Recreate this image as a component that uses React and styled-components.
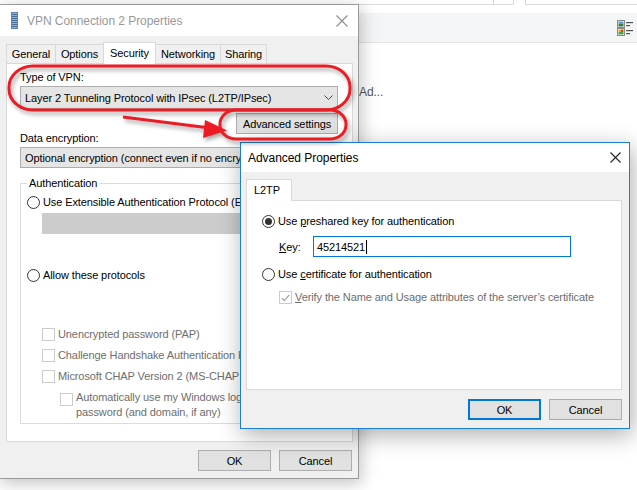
import React from 'react';
import styled, { createGlobalStyle } from 'styled-components';

const GlobalStyle = createGlobalStyle`
  html, body { margin: 0; padding: 0; background: #fff; }
  body {
    font-family: "Liberation Sans", Arial, sans-serif;
    font-size: 11px;
    letter-spacing: -0.1px;
    color: #000;
  }
  #root { width: 637px; height: 490px; }
`;

const Desktop = styled.div`
  position: relative;
  width: 637px;
  height: 490px;
  overflow: hidden;
  background: #fff;
`;

/* ---------- background (settings) window ---------- */
const BackWindow = styled.div`
  position: absolute;
  inset: 0;
  display: flex;
  flex-direction: column;
`;

const TopStrip = styled.div`
  display: flex;
  height: 5px;
`;

const StripCell = styled.div`
  box-sizing: border-box;
  width: ${p => p.$w}px;
  flex: ${p => (p.$grow ? '1' : 'none')};
  border-bottom: ${p => (p.$gap ? 'none' : '1px solid #dadada')};
  border-right: ${p => (p.$sep ? '1px solid #dadada' : 'none')};
`;

const ToolBand = styled.div`
  margin-top: 8px;
  height: 30px;
  box-sizing: border-box;
  background: #f4f5f6;
  border-bottom: 1px solid #e4e4e4;
  display: flex;
  align-items: center;
  justify-content: flex-end;
  padding-right: 4px;
`;

const BackContent = styled.div`
  padding: 42px 0 0 359px;
  color: #555;
  font-size: 12px;
`;

/* ---------- windows ---------- */
const Window = styled.div`
  position: absolute;
  left: ${p => p.$left}px;
  top: ${p => p.$top}px;
  width: ${p => p.$w}px;
  height: ${p => p.$h}px;
  box-sizing: border-box;
  border: 1px solid ${p => (p.$active ? '#1a7fd4' : '#9a9a9a')};
  background: #f0f0f0;
  display: flex;
  flex-direction: column;
  box-shadow: ${p => (p.$active ? '2px 6px 22px rgba(0,0,0,0.32)' : '2px 4px 16px rgba(0,0,0,0.25)')};
`;

const TitleBar = styled.div`
  height: ${p => p.$h}px;
  flex: none;
  background: #fff;
  display: flex;
  align-items: center;
  padding-left: ${p => p.$pl}px;
  gap: 9px;
`;

const TitleText = styled.span`
  font-size: 12px;
  letter-spacing: -0.05px;
  color: ${p => (p.$active ? '#000' : '#999')};
  flex: 1;
`;

const CloseBtn = styled.div`
  width: ${p => p.$w}px;
  height: 100%;
  display: flex;
  align-items: center;
  justify-content: center;
`;

const WinBody = styled.div`
  flex: 1;
  display: flex;
  flex-direction: column;
  padding: ${p => p.$pad};
`;

const TabRow = styled.div`
  display: flex;
  align-items: flex-end;
  height: 22px;
  margin-bottom: -1px;
  position: relative;
  z-index: 1;
`;

const Tab = styled.div`
  box-sizing: border-box;
  width: ${p => p.$w}px;
  height: ${p => (p.$active ? 22 : 20)}px;
  margin-left: ${p => (p.$first ? 0 : -1)}px;
  border: 1px solid #d9d9d9;
  border-bottom: ${p => (p.$active ? 'none' : '1px solid #d9d9d9')};
  background: ${p => (p.$active ? '#fff' : '#f0f0f0')};
  display: flex;
  align-items: center;
  justify-content: ${p => (p.$left ? 'flex-start' : 'center')};
  padding-left: ${p => (p.$left ? 7 : 0)}px;
  padding-bottom: ${p => (p.$active ? 1 : 0)}px;
  position: relative;
  z-index: ${p => (p.$active ? 2 : 1)};
`;

const Panel = styled.div`
  box-sizing: border-box;
  height: ${p => p.$h}px;
  flex: none;
  background: #fff;
  border: 1px solid #d9d9d9;
  display: flex;
  flex-direction: column;
  padding: ${p => p.$pad};
`;

const Label = styled.div`
  line-height: 15px;
  height: 15px;
  margin-top: ${p => p.$mt || 0}px;
  white-space: nowrap;
`;

const Select = styled.div`
  box-sizing: border-box;
  height: ${p => p.$h}px;
  margin-top: ${p => p.$mt || 0}px;
  border: 1px solid #adadad;
  background: #e5e5e5;
  display: flex;
  align-items: center;
  padding: 0 4px 0 4px;
  white-space: nowrap;
  overflow: hidden;
`;

const SelectText = styled.span`
  flex: 1;
`;

const ButtonRow = styled.div`
  display: flex;
  justify-content: flex-end;
  gap: 8px;
  margin-top: ${p => p.$mt || 0}px;
  padding-right: ${p => p.$pr || 0}px;
`;

const Button = styled.div`
  box-sizing: border-box;
  width: ${p => p.$w}px;
  height: 21px;
  background: #e1e1e1;
  border: ${p => (p.$default ? '2px solid #0078d7' : '1px solid #adadad')};
  display: flex;
  align-items: center;
  justify-content: center;
  white-space: nowrap;
`;

const Group = styled.fieldset`
  margin: ${p => p.$mt}px 0 0 0;
  min-width: 0;
  border: 1px solid #dcdcdc;
  padding: 0 0 3px 6px;
  display: flex;
  flex-direction: column;
`;

const Legend = styled.legend`
  padding: 0 2px;
  line-height: 15px;
`;

const OptionRow = styled.div`
  display: flex;
  align-items: ${p => (p.$top ? 'flex-start' : 'center')};
  gap: 3px;
  min-height: 15px;
  line-height: 15px;
  margin-top: ${p => p.$mt || 0}px;
  margin-left: ${p => p.$ml || 0}px;
  color: ${p => (p.$disabled ? '#6d6d6d' : '#000')};
  white-space: nowrap;
`;

const Radio = styled.span`
  box-sizing: border-box;
  width: 13px;
  height: 13px;
  flex: none;
  border-radius: 50%;
  border: 1px solid #333;
  background: #fff;
  display: flex;
  align-items: center;
  justify-content: center;
  &::after {
    content: '';
    width: 7px;
    height: 7px;
    border-radius: 50%;
    background: #333;
    display: ${p => (p.$checked ? 'block' : 'none')};
  }
`;

const Check = styled.span`
  box-sizing: border-box;
  width: 13px;
  height: 13px;
  flex: none;
  margin-top: ${p => p.$mt || 0}px;
  border: 1px solid #cccccc;
  background: #fff;
  display: flex;
  align-items: center;
  justify-content: center;
`;

const DisabledBox = styled.div`
  width: 290px;
  height: 21px;
  margin: 3px 0 0 15px;
  background: #cccccc;
`;

const KeyRow = styled.div`
  display: flex;
  align-items: center;
  margin: 7px 0 0 17px;
`;

const KeyLabel = styled.span`
  width: 34px;
`;

const TextInput = styled.div`
  box-sizing: border-box;
  width: 258px;
  height: 21px;
  border: 1px solid #0078d7;
  background: #fff;
  display: flex;
  align-items: center;
  padding-left: 3px;
`;

const Caret = styled.span`
  width: 1px;
  height: 14px;
  background: #000;
  margin-left: 1px;
`;

const Overlay = styled.svg`
  position: absolute;
  left: 0;
  top: 0;
  pointer-events: none;
  overflow: visible;
  filter: drop-shadow(2px 3px 2px rgba(0, 0, 0, 0.35));
`;

/* ---------- icons ---------- */
const VpnIcon = () => (
  <svg width="7" height="17" viewBox="0 0 7 17">
    <rect x="0" y="0" width="7" height="17" fill="#5e83b0" />
    <rect x="1" y="1" width="5" height="15" fill="#8fb0d6" />
    {[2, 4, 6, 8, 10, 12, 14].map(y => (
      <rect key={y} x="1" y={y} width="5" height="1" fill="#4a6f9c" />
    ))}
  </svg>
);

const XIcon = ({ color, size }) => (
  <svg width={size} height={size} viewBox={`0 0 ${size} ${size}`}>
    <path d={`M0.5 0.5 L${size - 0.5} ${size - 0.5} M${size - 0.5} 0.5 L0.5 ${size - 0.5}`} stroke={color} strokeWidth="1.1" fill="none" />
  </svg>
);

const Chevron = () => (
  <svg width="9" height="5" viewBox="0 0 9 5" style={{ marginRight: 0 }}>
    <path d="M0.5 0.5 L4.5 4.5 L8.5 0.5" stroke="#444" strokeWidth="1" fill="none" />
  </svg>
);

const CheckMark = () => (
  <svg width="9" height="8" viewBox="0 0 9 8">
    <path d="M0.8 4.2 L3.3 6.6 L8.2 0.9" stroke="#a8a8a8" strokeWidth="1.4" fill="none" />
  </svg>
);

const ViewIcon = () => (
  <svg width="16" height="16" viewBox="0 0 16 16">
    <rect x="0.5" y="0.5" width="7" height="7" fill="#fff" stroke="#8a8a8a" />
    <rect x="1.5" y="1.5" width="5" height="2" fill="#5aa0d8" />
    <rect x="1.5" y="3.5" width="5" height="3" fill="#3d7a3d" />
    <rect x="0.5" y="8.5" width="7" height="7" fill="#fff" stroke="#8a8a8a" />
    <rect x="1.5" y="9.5" width="2.5" height="2.5" fill="#e8b020" />
    <rect x="4" y="9.5" width="2.5" height="2.5" fill="#d84030" />
    <rect x="1.5" y="12" width="5" height="2.5" fill="#50a050" />
    <rect x="9" y="2" width="7" height="1.2" fill="#555" />
    <rect x="9" y="5" width="4" height="1.2" fill="#555" />
    <rect x="9" y="10" width="7" height="1.2" fill="#555" />
    <rect x="9" y="13" width="4" height="1.2" fill="#555" />
  </svg>
);

export default function App() {
  return (
    <Desktop>
      <GlobalStyle />

      <BackWindow>
        <TopStrip>
          <StripCell $w={494} $sep />
          <StripCell $w={20} $sep />
          <StripCell $w={12} $gap $sep />
          <StripCell $grow />
        </TopStrip>
        <ToolBand>
          <ViewIcon />
        </ToolBand>
        <BackContent>Ad...</BackContent>
      </BackWindow>

      {/* VPN Connection 2 Properties */}
      <Window $left={-1} $top={4} $w={360} $h={475}>
        <TitleBar $h={31} $pl={11}>
          <VpnIcon />
          <TitleText>VPN Connection 2 Properties</TitleText>
          <CloseBtn $w={32}>
            <XIcon color="#8c8c8c" size={12} />
          </CloseBtn>
        </TitleBar>
        <WinBody $pad="6px 5px 0 6px">
          <TabRow>
            <Tab $w={50} $first>General</Tab>
            <Tab $w={49}>Options</Tab>
            <Tab $w={53} $active>Security</Tab>
            <Tab $w={66}>Networking</Tab>
            <Tab $w={47}>Sharing</Tab>
          </TabRow>
          <Panel $h={379} $pad="6px 14px 0 13px">
            <Label>Type of VPN:</Label>
            <Select $h={23} $mt={1}>
              <SelectText>Layer 2 Tunneling Protocol with IPsec (L2TP/IPsec)</SelectText>
              <Chevron />
            </Select>
            <ButtonRow $mt={4}>
              <Button $w={102}>Advanced settings</Button>
            </ButtonRow>
            <Label $mt={-3}>Data encryption:</Label>
            <Select $h={21} $mt={1}>
              <SelectText>Optional encryption (connect even if no encryption)</SelectText>
              <Chevron />
            </Select>
            <Group $mt={8}>
              <Legend>Authentication</Legend>
              <OptionRow $mt={4}>
                <Radio />
                <span>Use Extensible Authentication Protocol (EAP)</span>
              </OptionRow>
              <DisabledBox />
              <OptionRow $mt={34}>
                <Radio />
                <span>Allow these protocols</span>
              </OptionRow>
              <OptionRow $mt={44} $ml={15} $disabled>
                <Check />
                <span>Unencrypted password (PAP)</span>
              </OptionRow>
              <OptionRow $mt={6} $ml={15} $disabled>
                <Check />
                <span>Challenge Handshake Authentication Protocol (CHAP)</span>
              </OptionRow>
              <OptionRow $mt={6} $ml={15} $disabled>
                <Check />
                <span>Microsoft CHAP Version 2 (MS-CHAP v2)</span>
              </OptionRow>
              <OptionRow $mt={6} $ml={33} $disabled $top>
                <Check $mt={3} />
                <span>
                  Automatically use my Windows logon name and
                  <br />
                  password (and domain, if any)
                </span>
              </OptionRow>
            </Group>
          </Panel>
          <ButtonRow $mt={8} $pr={1}>
            <Button $w={73}>OK</Button>
            <Button $w={73}>Cancel</Button>
          </ButtonRow>
        </WinBody>
      </Window>

      {/* Advanced Properties */}
      <Window $left={240} $top={142} $w={390} $h={287} $active>
        <TitleBar $h={29} $pl={7}>
          <TitleText $active>Advanced Properties</TitleText>
          <CloseBtn $w={28}>
            <XIcon color="#222" size={11} />
          </CloseBtn>
        </TitleBar>
        <WinBody $pad="7px 7px 0 5px">
          <TabRow>
            <Tab $w={46} $first $active $left>L2TP</Tab>
          </TabRow>
          <Panel $h={190} $pad="13px 8px 0 15px">
            <OptionRow>
              <Radio $checked />
              <span>
                Use <u>p</u>reshared key for authentication
              </span>
            </OptionRow>
            <KeyRow>
              <KeyLabel>
                <u>K</u>ey:
              </KeyLabel>
              <TextInput>
                <span>45214521</span>
                <Caret />
              </TextInput>
            </KeyRow>
            <OptionRow $mt={10}>
              <Radio />
              <span>
                Use <u>c</u>ertificate for authentication
              </span>
            </OptionRow>
            <OptionRow $mt={8} $ml={17} $disabled>
              <Check>
                <CheckMark />
              </Check>
              <span>
                <u>V</u>erify the Name and Usage attributes of the server’s certificate
              </span>
            </OptionRow>
          </Panel>
          <ButtonRow $mt={9} $pr={0}>
            <Button $w={73} $default>OK</Button>
            <Button $w={73}>Cancel</Button>
          </ButtonRow>
        </WinBody>
      </Window>

      {/* red annotations */}
      <Overlay width="637" height="490" viewBox="0 0 637 490">
        <rect x="9" y="66" width="341" height="44" rx="24" ry="21" fill="none" stroke="#ec1c24" strokeWidth="3" />
        <rect x="220" y="110" width="126" height="29" rx="16" ry="14" fill="none" stroke="#ec1c24" strokeWidth="3" />
        <line x1="123" y1="117" x2="210" y2="128" stroke="#ec1c24" strokeWidth="3" />
        <polygon points="227,130.5 205,120 203,138" fill="#ec1c24" />
      </Overlay>
    </Desktop>
  );
}
